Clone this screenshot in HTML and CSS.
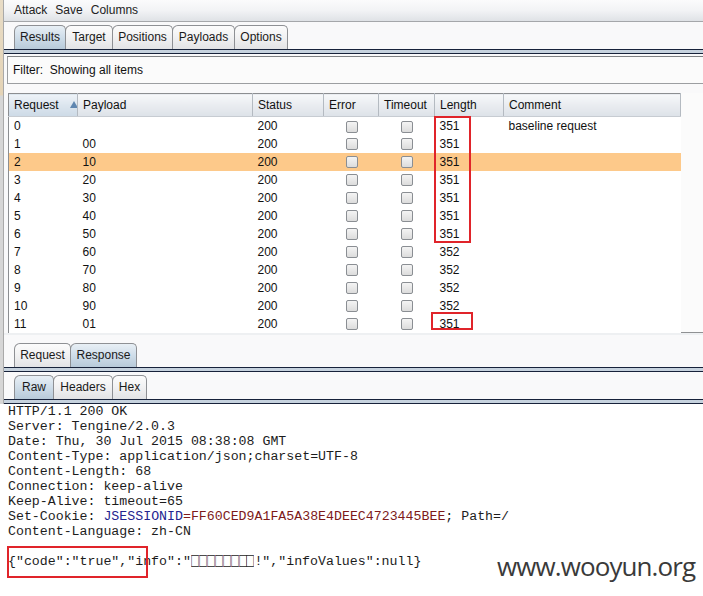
FILE: index.html
```html
<!DOCTYPE html>
<html>
<head>
<meta charset="utf-8">
<link rel="stylesheet" href="styles.css">
</head>
<body>
<div class="screen">
  <div class="edge"></div>
  <div class="app">
    <div class="menubar"><span>Attack</span><span>Save</span><span>Columns</span></div>
    <div class="tabs tabs-main">
      <div class="tab sel w-results">Results</div>
      <div class="tab w-target">Target</div>
      <div class="tab w-positions">Positions</div>
      <div class="tab w-payloads">Payloads</div>
      <div class="tab w-options">Options</div>
    </div>
    <div class="band"></div>
    <div class="filter">Filter:&nbsp; Showing all items</div>
    <div class="pane">
      <table class="grid">
        <colgroup>
          <col class="c-req"><col class="c-pay"><col class="c-st"><col class="c-err"><col class="c-to"><col class="c-len"><col class="c-com">
        </colgroup>
        <thead>
          <tr>
            <th class="sorted">Request<span class="arrow"></span></th>
            <th>Payload</th><th>Status</th><th>Error</th><th>Timeout</th><th>Length</th><th>Comment</th>
          </tr>
        </thead>
        <tbody>
          <tr><td>0</td><td></td><td>200</td><td class="ck"><span class="cb"></span></td><td class="ck"><span class="cb"></span></td><td>351</td><td>baseline request</td></tr>
          <tr><td>1</td><td>00</td><td>200</td><td class="ck"><span class="cb"></span></td><td class="ck"><span class="cb"></span></td><td>351</td><td></td></tr>
          <tr class="hl"><td>2</td><td>10</td><td>200</td><td class="ck"><span class="cb"></span></td><td class="ck"><span class="cb"></span></td><td>351</td><td></td></tr>
          <tr><td>3</td><td>20</td><td>200</td><td class="ck"><span class="cb"></span></td><td class="ck"><span class="cb"></span></td><td>351</td><td></td></tr>
          <tr><td>4</td><td>30</td><td>200</td><td class="ck"><span class="cb"></span></td><td class="ck"><span class="cb"></span></td><td>351</td><td></td></tr>
          <tr><td>5</td><td>40</td><td>200</td><td class="ck"><span class="cb"></span></td><td class="ck"><span class="cb"></span></td><td>351</td><td></td></tr>
          <tr><td>6</td><td>50</td><td>200</td><td class="ck"><span class="cb"></span></td><td class="ck"><span class="cb"></span></td><td>351</td><td></td></tr>
          <tr><td>7</td><td>60</td><td>200</td><td class="ck"><span class="cb"></span></td><td class="ck"><span class="cb"></span></td><td>352</td><td></td></tr>
          <tr><td>8</td><td>70</td><td>200</td><td class="ck"><span class="cb"></span></td><td class="ck"><span class="cb"></span></td><td>352</td><td></td></tr>
          <tr><td>9</td><td>80</td><td>200</td><td class="ck"><span class="cb"></span></td><td class="ck"><span class="cb"></span></td><td>352</td><td></td></tr>
          <tr><td>10</td><td>90</td><td>200</td><td class="ck"><span class="cb"></span></td><td class="ck"><span class="cb"></span></td><td>352</td><td></td></tr>
          <tr><td>11</td><td>01</td><td>200</td><td class="ck"><span class="cb"></span></td><td class="ck"><span class="cb"></span></td><td>351</td><td></td></tr>
        </tbody>
      </table>
      <div class="mark mark-a"></div>
      <div class="mark mark-b"></div>
    </div>
    <div class="split"></div>
    <div class="tabs tabs-sub">
      <div class="tab w-request">Request</div>
      <div class="tab sel w-response">Response</div>
    </div>
    <div class="band"></div>
    <div class="tabs tabs-sub2">
      <div class="tab sel w-raw">Raw</div>
      <div class="tab w-headers">Headers</div>
      <div class="tab w-hex">Hex</div>
    </div>
    <div class="band"></div>
    <div class="rawwrap">
<pre class="raw">HTTP/1.1 200 OK
Server: Tengine/2.0.3
Date: Thu, 30 Jul 2015 08:38:08 GMT
Content-Type: application/json;charset=UTF-8
Content-Length: 68
Connection: keep-alive
Keep-Alive: timeout=65
Set-Cookie: <span class="k">JSESSIONID</span><span class="v">=FF60CED9A1FA5A38E4DEEC4723445BEE</span>; Path=/
Content-Language: zh-CN

{"code":"true","info":"<span class="tofu">□</span><span class="tofu">□</span><span class="tofu">□</span><span class="tofu">□</span><span class="tofu">□</span><span class="tofu">□</span><span class="tofu">□</span><span class="tofu">□</span>!","infoValues":null}</pre>
      <div class="mark mark-c"></div>
    </div>
  </div>
  <div class="watermark">www.wooyun.org</div>
</div>
</body>
</html>
```
FILE: styles.css
```css
* { box-sizing: border-box; }
html, body { margin: 0; padding: 0; }
body {
  width: 703px;
  height: 596px;
  overflow: hidden;
  font-family: "Liberation Sans", Arial, sans-serif;
  font-size: 12px;
  color: #111;
  background: #fff;
}
.screen {
  position: relative;
  display: flex;
  width: 703px;
  height: 596px;
}
.edge {
  width: 4px;
  flex: none;
  background: linear-gradient(#e8dcc6 0, #e4d3b6 95px, #d6d6d6 96px, #d6d6d6 545px, #f2f2f2 546px);
  border-right: 1px solid #a9a9a9;
}
.app {
  flex: 1;
  display: flex;
  flex-direction: column;
  background: #f9f9fa;
  min-width: 0;
}
.menubar {
  height: 22px;
  display: flex;
  align-items: center;
  gap: 8px;
  padding: 0 0 1px 10px;
  background: linear-gradient(#fbfbfc, #f2f3f5 50%, #dfe2e6);
  border-bottom: 1px solid #a5a7aa;
  color: #222;
}
.tabs {
  display: flex;
  padding-left: 10px;
  align-items: flex-end;
}
.tabs-main { height: 27px; }
.tabs-sub { height: 24px; margin-top: 8px; }
.tabs-sub2 { height: 27px; }
.tab {
  height: 24px;
  display: flex;
  align-items: center;
  justify-content: center;
  border: 1px solid #8e9094;
  border-bottom: none;
  border-radius: 6px 5px 0 0;
  background: linear-gradient(#fcfcfc, #f1f1f2 50%, #e2e3e5);
  color: #1a1a1a;
  margin-right: -1px;
  padding-bottom: 1px;
}
.tab.sel {
  background: linear-gradient(#e8eff5, #cfdde9 50%, #b8cad9);
}
.w-results { width: 52px; }
.w-target { width: 48px; }
.w-positions { width: 61px; }
.w-payloads { width: 63px; }
.w-options { width: 54px; }
.w-request { width: 57px; }
.w-response { width: 67px; }
.w-raw { width: 40px; }
.w-headers { width: 60px; }
.w-hex { width: 35px; }
.band {
  height: 5px;
  flex: none;
  border-top: 1px solid #17223a;
  border-bottom: 1px solid #17223a;
  background: #c6d2de;
}
.filter {
  margin: 2px 0 0 3px;
  height: 28px;
  display: flex;
  align-items: center;
  padding-left: 5px;
  background: #fbfbfb;
  border-top: 1px solid #7f8184;
  border-bottom: 1px solid #9c9ea1;
  border-left: 1px solid #9c9ea1;
  color: #111;
}
.pane {
  position: relative;
  margin: 9px 0 0 4px;
  height: 240px;
  background: #fbfbfb;
  border-bottom: 1px solid #8f9193;
}
.grid {
  border-collapse: collapse;
  table-layout: fixed;
  width: 672px;
  background: #fff;
}
.c-req { width: 69px; }
.c-pay { width: 175px; }
.c-st { width: 71px; }
.c-err { width: 55px; }
.c-to { width: 56px; }
.c-len { width: 69px; }
.c-com { width: 177px; }
.grid th {
  height: 23px;
  text-align: left;
  font-weight: normal;
  padding: 0 0 0 5px;
  background: linear-gradient(#f7f8fa, #e9ecf0 50%, #dde2e8);
  border-top: 1px solid #8c8e91;
  border-bottom: 1px solid #c7ccd2;
  border-right: 1px solid #b4bac1;
  border-left: 1px solid #c9ced4;
  color: #111;
  white-space: nowrap;
  overflow: hidden;
}
.grid th.sorted {
  background: linear-gradient(#eef3f8, #dbe5ee 50%, #cddae6);
  border-left: 1px solid #8c8e91;
}
.arrow {
  display: inline-block;
  width: 0;
  height: 0;
  margin-left: 11px;
  vertical-align: 1px;
  border-left: 4px solid transparent;
  border-right: 4px solid transparent;
  border-bottom: 7px solid #5f86b0;
}
.grid td {
  height: 18px;
  padding: 0 0 0 5px;
  white-space: nowrap;
  color: #111;
}
.grid tbody tr td:first-child { border-left: 1px solid #8c8e91; }
.grid tr.hl td { background: #fdc98a; }
.grid td.ck { padding: 0; text-align: center; }
.cb {
  display: inline-block;
  width: 12px;
  height: 12px;
  vertical-align: middle;
  border: 1px solid #8a8e93;
  border-radius: 2px;
  background: linear-gradient(#f4f4f4, #dcdcdc);
  margin-left: 1px;
}
.mark {
  position: absolute;
  border: 2px solid #e0242a;
}
.mark-a { left: 426px; top: 23px; width: 37px; height: 127px; }
.mark-b { left: 423px; top: 219px; width: 42px; height: 18px; }
.split {
  height: 2px;
  flex: none;
  background: #eef0f2;
}
.rawwrap {
  position: relative;
  flex: 1;
  background: #fff;
  margin-left: -4px;
}
.raw {
  margin: 0;
  padding: 0 0 0 8px;
  font-family: "Liberation Mono", "Courier New", monospace;
  font-size: 13.25px;
  line-height: 15px;
  color: #1c1c1c;
}
.raw .k { color: #24248f; }
.raw .v { color: #7d1a1a; }
.tofu {
  display: inline-block;
  width: 1ch;
  text-align: center;
  transform: scale(0.95, 1.5);
}
.mark-c { left: 7px; top: 142px; width: 141px; height: 32px; }
.watermark {
  position: absolute;
  left: 497px;
  top: 548px;
  font-family: "Open Sans", "DejaVu Sans", sans-serif;
  font-size: 26px;
  color: #3a3a3a;
  letter-spacing: -0.9px;
}
```
